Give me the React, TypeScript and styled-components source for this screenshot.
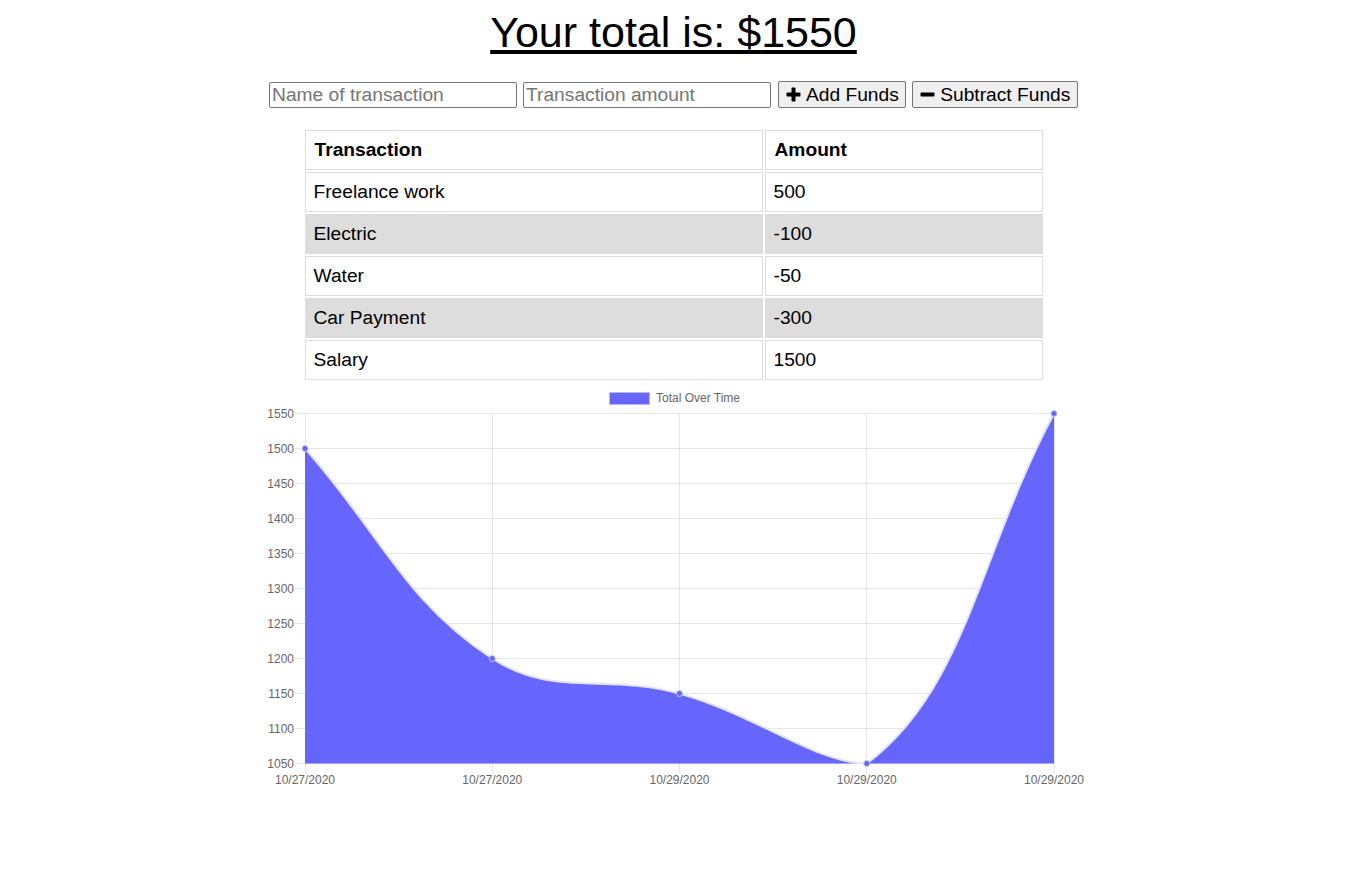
import React from 'react';
import styled, { createGlobalStyle } from 'styled-components';

const GlobalStyle = createGlobalStyle`
  body {
    margin: 8px;
    font-family: "Liberation Sans", Arial, Helvetica, sans-serif;
    color: #000;
    background: #fff;
  }
`;

const Page = styled.div`
  display: flex;
  flex-direction: column;
  align-items: center;
  padding-right: 24px;
`;

const Title = styled.h1`
  margin: 0;
  font-size: 43px;
  font-weight: 400;
  line-height: normal;
  text-decoration: underline;
`;

const Form = styled.div`
  display: flex;
  align-items: center;
  gap: 6px;
  margin-top: 24px;
  height: 27px;
`;

const Input = styled.input`
  box-sizing: border-box;
  width: 248px;
  height: 26px;
  padding: 1px 2px;
  border: 1px solid #767676;
  border-radius: 2px;
  font-family: inherit;
  font-size: 19.2px;
  color: #000;
  &::placeholder {
    color: #757575;
  }
`;

const Button = styled.button<{ $first?: boolean }>`
  box-sizing: border-box;
  display: inline-flex;
  align-items: center;
  gap: 5.3px;
  height: 27px;
  margin-left: ${p => (p.$first ? '1px' : '0')};
  padding: 0 6.6px;
  border: 1px solid #767676;
  border-radius: 2px;
  background: #efefef;
  font-family: inherit;
  font-size: 19.2px;
  color: #000;
`;

const Table = styled.table`
  margin-top: 20px;
  border-collapse: separate;
  border-spacing: 2px;
  table-layout: fixed;
  width: 742px;
  font-size: 19.2px;
`;

const Col = styled.col<{ $width: number }>`
  width: ${p => p.$width}px;
`;

const HeadCell = styled.th`
  box-sizing: border-box;
  padding: 8px 8px 8px 9px;
  border: 1px solid #ddd;
  text-align: left;
  font-weight: 700;
  line-height: normal;
`;

const Cell = styled.td<{ $striped: boolean }>`
  box-sizing: border-box;
  padding: 8px;
  border: 1px solid #ddd;
  line-height: normal;
  background: ${p => (p.$striped ? '#ddd' : '#fff')};
`;

const ChartSvg = styled.svg`
  display: block;
`;

const ChartText = styled.text`
  font-family: "Liberation Sans", Arial, Helvetica, sans-serif;
  font-size: 12px;
  fill: #666;
`;

const PlusIcon = () => (
  <svg width="15" height="15" viewBox="0 0 15 15" fill="#000">
    <rect x="5.5" y="0.5" width="4" height="14" rx="1" />
    <rect x="0.5" y="5.5" width="14" height="4" rx="1" />
  </svg>
);

const MinusIcon = () => (
  <svg width="15" height="15" viewBox="0 0 15 15" fill="#000">
    <rect x="0.5" y="5.5" width="14" height="4" rx="1" />
  </svg>
);

const transactions = [
  { name: 'Freelance work', value: 500 },
  { name: 'Electric', value: -100 },
  { name: 'Water', value: -50 },
  { name: 'Car Payment', value: -300 },
  { name: 'Salary', value: 1500 },
];

const dates = ['10/27/2020', '10/27/2020', '10/29/2020', '10/29/2020', '10/29/2020'];
const totals = [1500, 1200, 1150, 1050, 1550];

type Pt = { x: number; y: number };

const area = { left: 41, right: 790, top: 31.5, bottom: 381.5 };
const yMin = 1050;
const yMax = 1550;

const clamp = (v: number, lo: number, hi: number) => Math.max(lo, Math.min(hi, v));

// same curve maths as chart.js (tension 0.4, control points capped to the area)
function controlPoints(prev: Pt, cur: Pt, next: Pt, t: number) {
  const d01 = Math.hypot(cur.x - prev.x, cur.y - prev.y);
  const d12 = Math.hypot(next.x - cur.x, next.y - cur.y);
  const s01 = d01 + d12 === 0 ? 0 : d01 / (d01 + d12);
  const s12 = d01 + d12 === 0 ? 0 : d12 / (d01 + d12);
  const fa = t * s01;
  const fb = t * s12;
  const cap = (p: Pt) => ({
    x: clamp(p.x, area.left, area.right),
    y: clamp(p.y, area.top, area.bottom),
  });
  return {
    before: cap({ x: cur.x - fa * (next.x - prev.x), y: cur.y - fa * (next.y - prev.y) }),
    after: cap({ x: cur.x + fb * (next.x - prev.x), y: cur.y + fb * (next.y - prev.y) }),
  };
}

const Chart = () => {
  const n = totals.length;
  const stepX = (area.right - area.left) / (n - 1);
  const yAt = (v: number) => area.bottom - ((v - yMin) / (yMax - yMin)) * (area.bottom - area.top);
  const pts: Pt[] = totals.map((v, i) => ({ x: area.left + i * stepX, y: yAt(v) }));
  const cps = pts.map((p, i) => controlPoints(pts[i - 1] || p, p, pts[i + 1] || p, 0.4));

  let line = `M${pts[0].x},${pts[0].y}`;
  for (let i = 1; i < n; i++) {
    const a = cps[i - 1].after;
    const b = cps[i].before;
    line += ` C${a.x},${a.y} ${b.x},${b.y} ${pts[i].x},${pts[i].y}`;
  }
  const fill = `${line} L${pts[n - 1].x},${area.bottom} L${pts[0].x},${area.bottom} Z`;

  const ticks: number[] = [];
  for (let v = yMax; v >= yMin; v -= 50) ticks.push(v);

  const px = (v: number) => Math.floor(v) + 0.5;

  return (
    <ChartSvg width="820" height="412" viewBox="0 0 820 412">
      <rect x="345.5" y="10.5" width="40" height="12" fill="#6666ff" stroke="#b8b8ff" strokeWidth="1" />
      <ChartText x="392" y="19.5">Total Over Time</ChartText>

      {ticks.map(v => (
        <line key={v} x1={area.left - 10} x2={area.right} y1={px(yAt(v))} y2={px(yAt(v))} stroke="rgba(0,0,0,0.1)" />
      ))}
      {pts.map((p, i) => (
        <line key={i} x1={px(p.x)} x2={px(p.x)} y1={area.top} y2={area.bottom + 10} stroke="rgba(0,0,0,0.1)" />
      ))}

      {ticks.map(v => (
        <ChartText key={v} x="30" y={yAt(v) + 4}>
          <tspan textAnchor="end">{v}</tspan>
        </ChartText>
      ))}
      {dates.map((d, i) => (
        <ChartText key={i} x={pts[i].x} y="402" textAnchor="middle">
          {d}
        </ChartText>
      ))}

      <path d={fill} fill="#6666ff" />
      <path d={line} fill="none" stroke="#e4e4f6" strokeWidth="2" />
      {pts.map((p, i) => (
        <circle key={i} cx={p.x} cy={p.y} r="3" fill="#6666ff" stroke="#c8c8f8" strokeWidth="1" />
      ))}
    </ChartSvg>
  );
};

const App = () => {
  const total = transactions.reduce((sum, t) => sum + t.value, 0) + 0;

  return (
    <>
      <GlobalStyle />
      <Page>
        <Title>Your total is: ${total}</Title>
        <Form>
          <Input type="text" placeholder="Name of transaction" />
          <Input type="number" placeholder="Transaction amount" />
          <Button $first>
            <PlusIcon />
            Add Funds
          </Button>
          <Button>
            <MinusIcon />
            Subtract Funds
          </Button>
        </Form>
        <Table>
          <colgroup>
            <Col $width={458} />
            <Col $width={278} />
          </colgroup>
          <thead>
            <tr>
              <HeadCell>Transaction</HeadCell>
              <HeadCell>Amount</HeadCell>
            </tr>
          </thead>
          <tbody>
            {transactions.map((t, i) => (
              <tr key={t.name}>
                <Cell $striped={i % 2 === 1}>{t.name}</Cell>
                <Cell $striped={i % 2 === 1}>{t.value}</Cell>
              </tr>
            ))}
          </tbody>
        </Table>
        <Chart />
      </Page>
    </>
  );
};

export default App;
